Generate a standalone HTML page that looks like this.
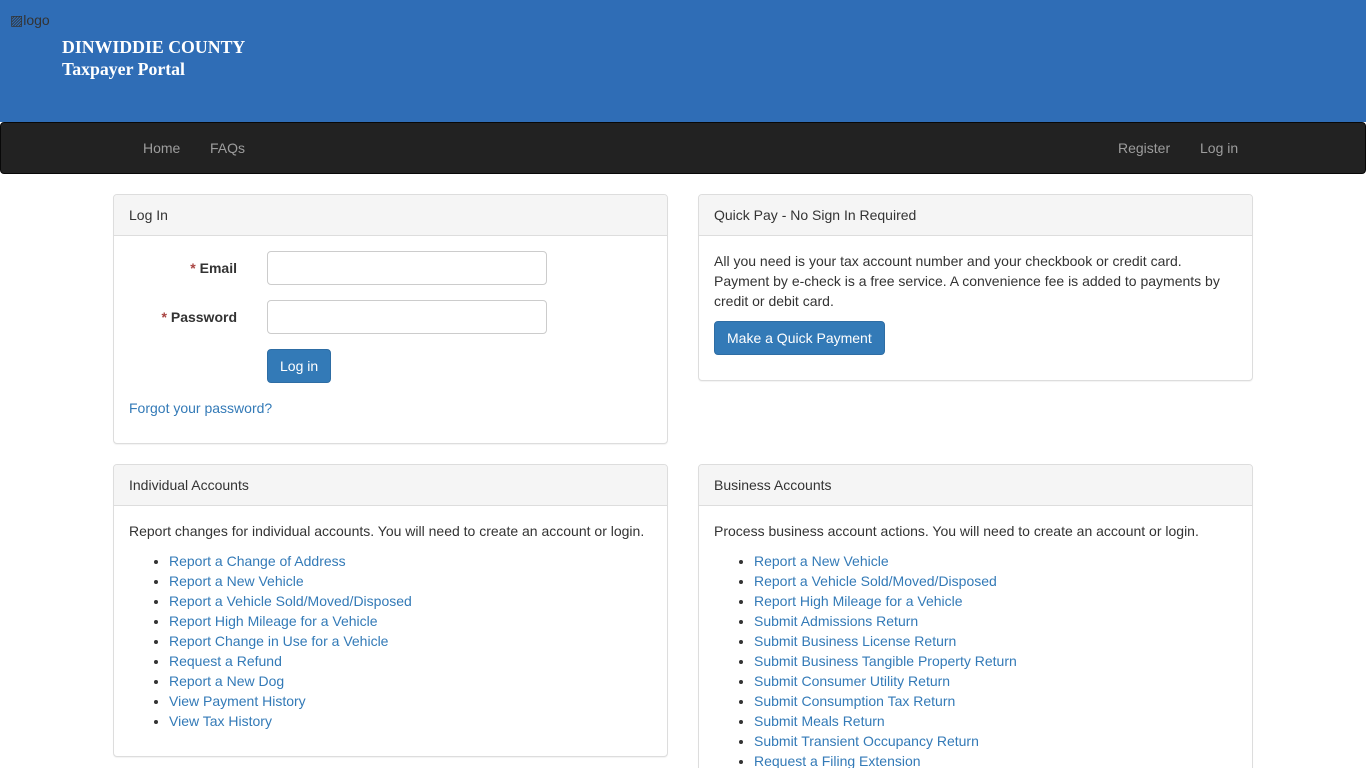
<!DOCTYPE html>
<html><head><style>
*{box-sizing:border-box}
html,body{height:768px;overflow:hidden}
body{margin:0;font-family:"Liberation Sans",Arial,sans-serif;font-size:14px;line-height:20px;color:#333;background:#fff;position:relative}
.hdr{height:122px;background:#2f6db6;position:relative}
.logo{position:absolute;left:10px;top:10px;color:#333;font-size:14px}
.t1{position:absolute;left:62px;top:37px;color:#fff;font-family:"Liberation Serif",serif;font-weight:bold;font-size:17.8px}
.t2{position:absolute;left:62px;top:59px;color:#fff;font-family:"Liberation Serif",serif;font-weight:bold;font-size:17.8px}
.nav{position:absolute;top:122px;left:0;width:1366px;height:52px;background:#222;border:1px solid #080808;border-radius:4px}
.nav a{position:absolute;top:15px;color:#9d9d9d;text-decoration:none;font-size:14px}
.panel{position:absolute;border:1px solid #ddd;border-radius:4px;background:#fff;box-shadow:0 1px 1px rgba(0,0,0,.05);width:555px}
.ph{height:41px;background:#f5f5f5;border-bottom:1px solid #ddd;padding:10px 15px;border-radius:3px 3px 0 0}
.pb{padding:15px;position:relative}
a{color:#337ab7;text-decoration:none}
ul{margin:10px 0 0;padding-left:40px}
.lbl{position:absolute;right:0;font-weight:bold;text-align:right;width:120px}
.lbl span{color:#a94442}
.inp{position:absolute;left:153px;width:280px;height:34px;border:1px solid #ccc;border-radius:4px}
.btn{display:inline-block;background:#337ab7;color:#fff;border:1px solid #2e6da4;border-radius:4px;padding:6px 12px;font-size:14px;line-height:20px}
</style></head><body>
<div class="hdr"><div class="logo">▨logo</div><div class="t1">DINWIDDIE COUNTY</div><div class="t2">Taxpayer Portal</div></div>
<div class="nav"><a style="left:142px">Home</a><a style="left:209px">FAQs</a><a style="left:1117px">Register</a><a style="left:1199px">Log in</a></div>

<div class="panel" style="left:113px;top:194px;height:250px">
<div class="ph">Log In</div>
<div class="pb" style="height:207px">
<div style="position:absolute;left:0;top:22px;width:123px"><div class="lbl"><span>*</span> Email</div></div>
<div class="inp" style="top:15px"></div>
<div style="position:absolute;left:0;top:71px;width:123px"><div class="lbl"><span>*</span> Password</div></div>
<div class="inp" style="top:64px"></div>
<div class="btn" style="position:absolute;left:153px;top:113px">Log in</div>
<a style="position:absolute;left:15px;top:162px">Forgot your password?</a>
</div></div>

<div class="panel" style="left:698px;top:194px;height:187px">
<div class="ph">Quick Pay - No Sign In Required</div>
<div class="pb">All you need is your tax account number and your checkbook or credit card. Payment by e-check is a free service. A convenience fee is added to payments by credit or debit card.<div style="margin-top:10px"><span class="btn">Make a Quick Payment</span></div></div></div>

<div class="panel" style="left:113px;top:464px;height:293px">
<div class="ph">Individual Accounts</div>
<div class="pb">Report changes for individual accounts. You will need to create an account or login.
<ul><li><a>Report a Change of Address</a></li><li><a>Report a New Vehicle</a></li><li><a>Report a Vehicle Sold/Moved/Disposed</a></li><li><a>Report High Mileage for a Vehicle</a></li><li><a>Report Change in Use for a Vehicle</a></li><li><a>Request a Refund</a></li><li><a>Report a New Dog</a></li><li><a>View Payment History</a></li><li><a>View Tax History</a></li></ul></div></div>

<div class="panel" style="left:698px;top:464px;height:340px">
<div class="ph">Business Accounts</div>
<div class="pb">Process business account actions. You will need to create an account or login.
<ul><li><a>Report a New Vehicle</a></li><li><a>Report a Vehicle Sold/Moved/Disposed</a></li><li><a>Report High Mileage for a Vehicle</a></li><li><a>Submit Admissions Return</a></li><li><a>Submit Business License Return</a></li><li><a>Submit Business Tangible Property Return</a></li><li><a>Submit Consumer Utility Return</a></li><li><a>Submit Consumption Tax Return</a></li><li><a>Submit Meals Return</a></li><li><a>Submit Transient Occupancy Return</a></li><li><a>Request a Filing Extension</a></li></ul></div></div>
</body></html>
